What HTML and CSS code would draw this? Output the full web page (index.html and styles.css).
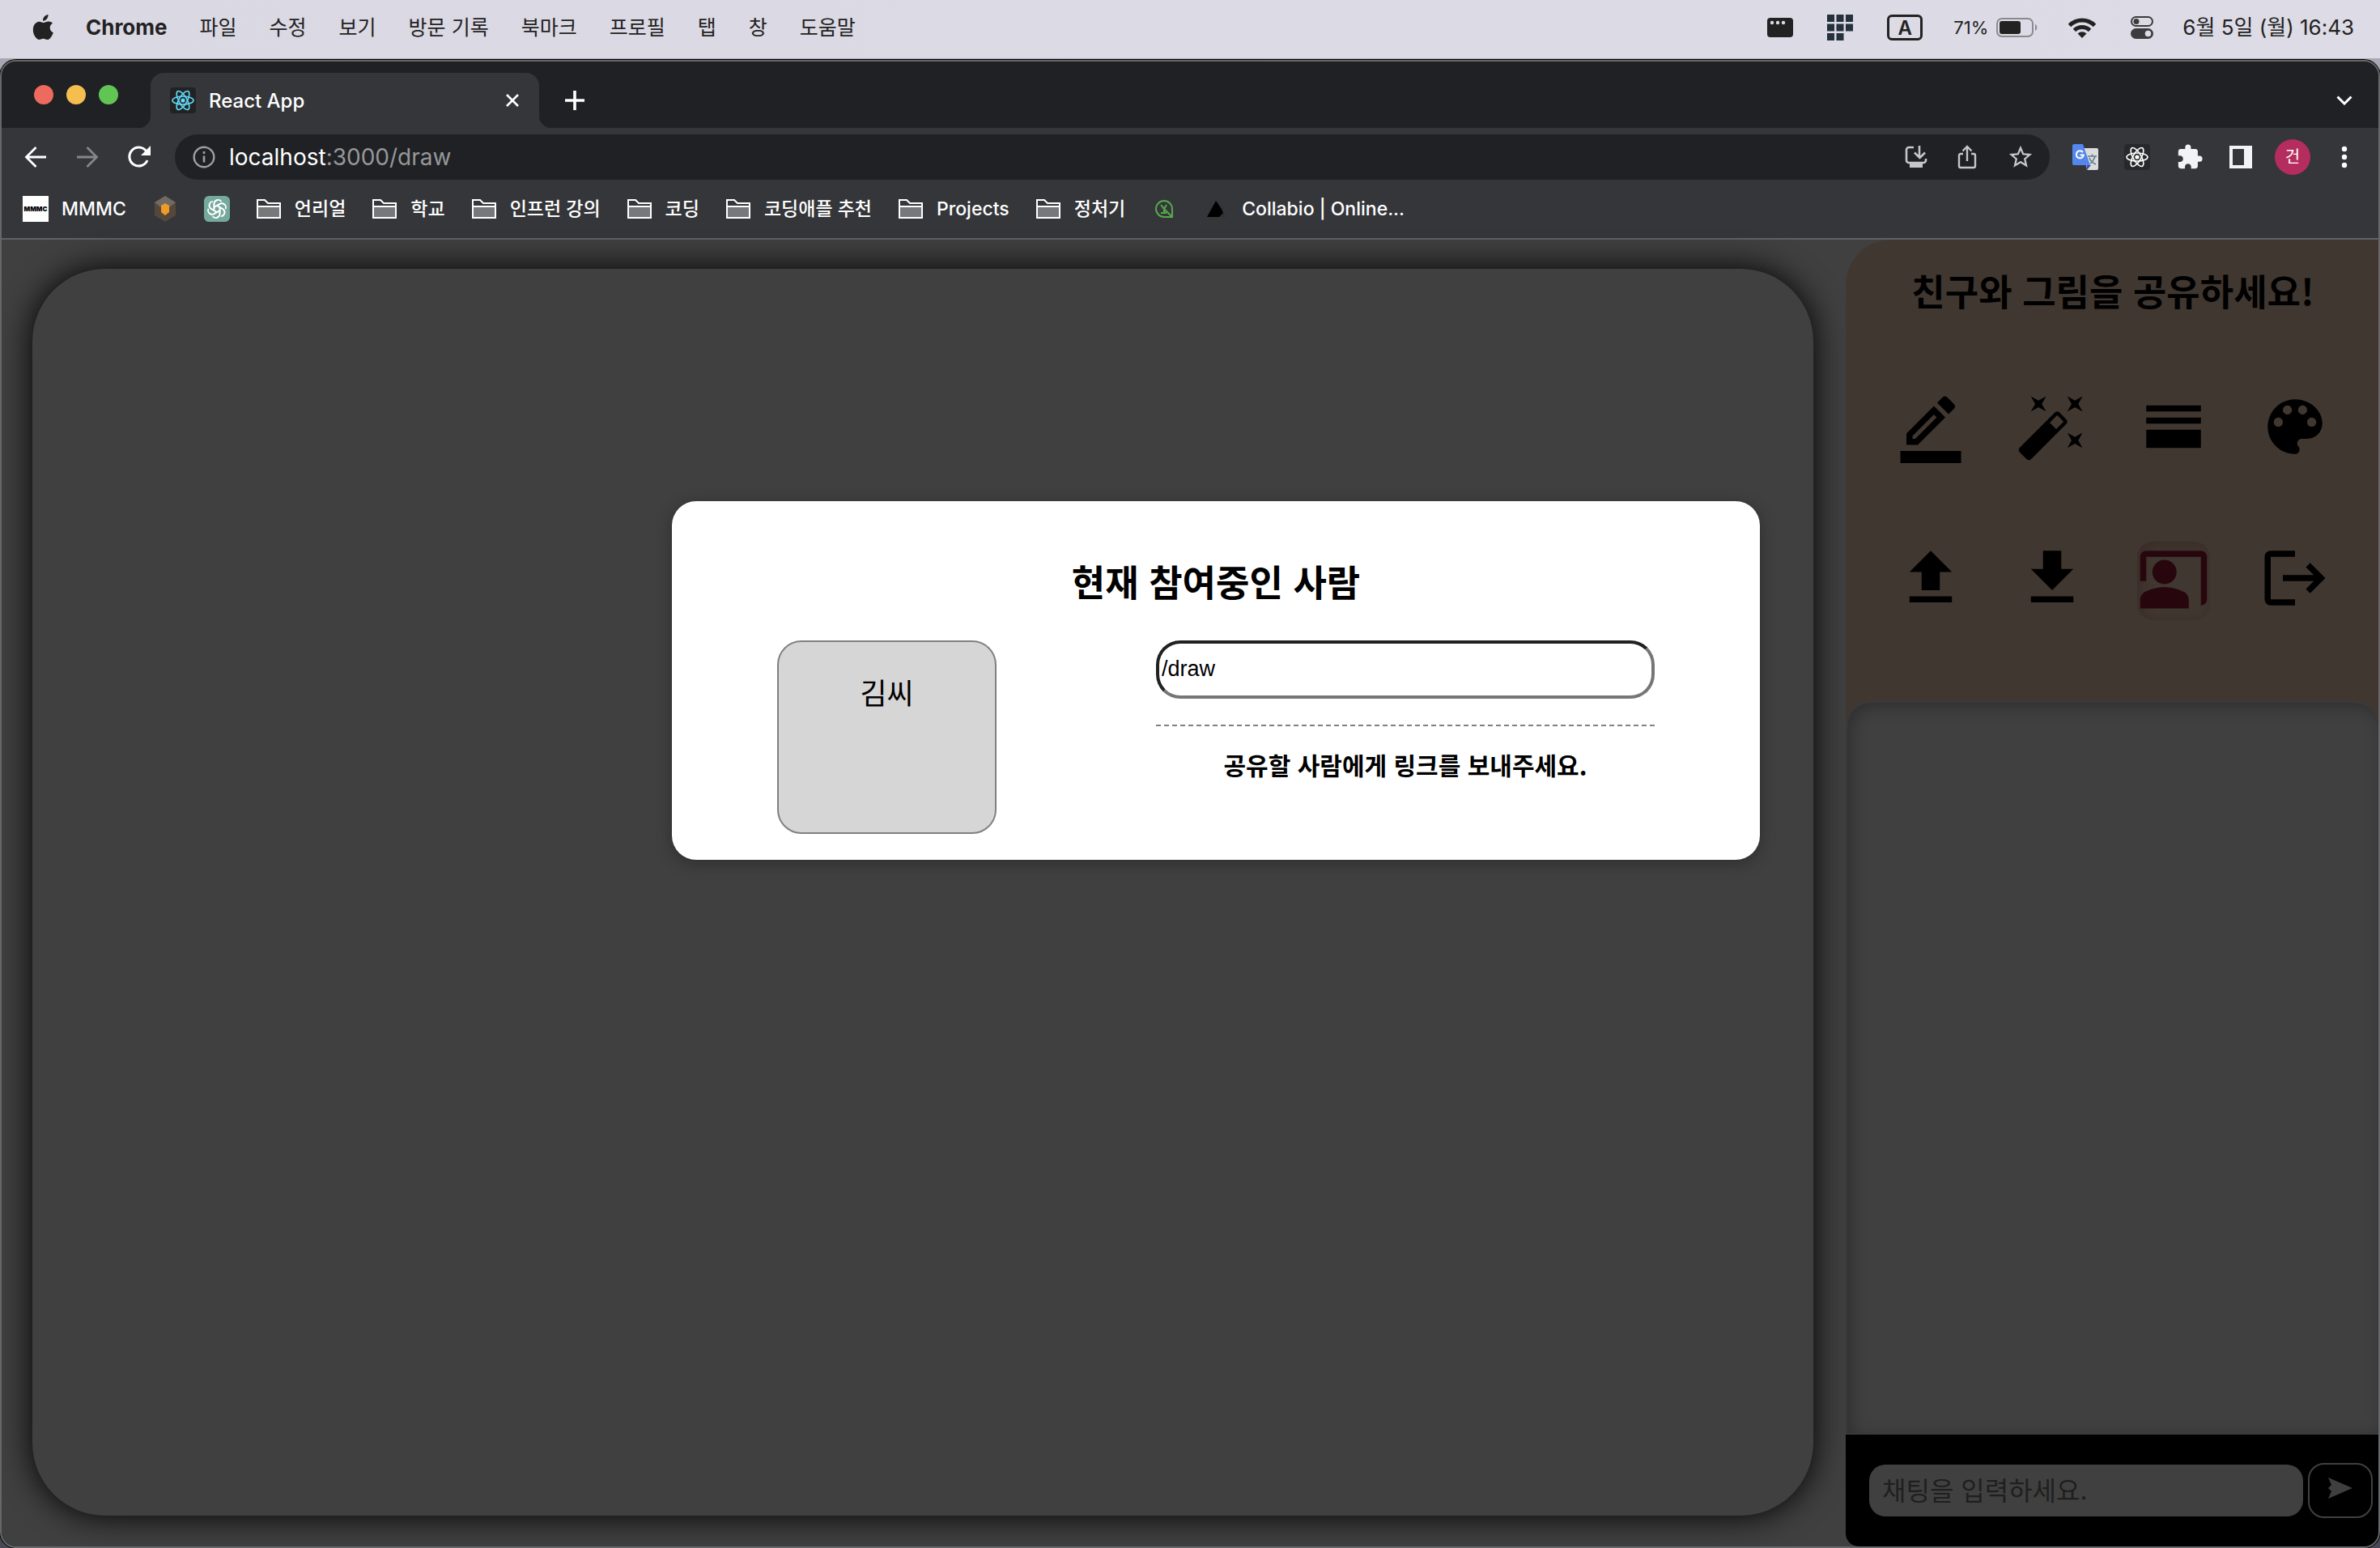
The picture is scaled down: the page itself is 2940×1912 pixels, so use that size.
FILE: index.html
```html
<!DOCTYPE html>
<html lang="ko">
<head>
<meta charset="utf-8">
<title>React App</title>
<link rel="stylesheet" href="styles.css">
</head>
<body>
<svg class="defs" aria-hidden="true">
  <symbol id="folder" viewBox="0 0 32 32">
    <path d="M2 13h28v14H2z" fill="#77787a"/>
    <path d="M2 27V5h9l4 4h15v18zM2 13h28" fill="none" stroke="#fff" stroke-width="2"/>
  </symbol>
  <symbol id="atom" viewBox="0 0 32 32">
    <g fill="none" stroke="currentColor" stroke-width="1.6">
      <ellipse cx="16" cy="16" rx="13" ry="5"/>
      <ellipse cx="16" cy="16" rx="13" ry="5" transform="rotate(60 16 16)"/>
      <ellipse cx="16" cy="16" rx="13" ry="5" transform="rotate(120 16 16)"/>
    </g>
    <circle cx="16" cy="16" r="2.6" fill="currentColor"/>
  </symbol>
</svg>

<header class="menubar">
  <nav class="menus" aria-label="메뉴">
    <svg class="apple" viewBox="0 0 28 34"><path d="M19.500 1c.2 2.100-.6 4-1.800 5.400-1.200 1.400-3 2.400-4.700 2.200-.2-2 .7-4 1.800-5.200C16 2 18 1.100 19.500 1zM25 11.800c-2 1.200-3.300 3-3.300 5.500 0 2.800 1.600 5 4.100 6-.5 1.600-1.300 3.200-2.200 4.600-1.400 2-2.800 4.100-5 4.100-2.100 0-2.800-1.300-5.200-1.300-2.500 0-3.200 1.300-5.200 1.300-2.200 0-3.800-2.200-5.100-4.200C.5 24 .1 17.700 2.100 14c1.500-2.700 4-4.300 6.400-4.300 2.300 0 3.900 1.400 5.500 1.400 1.700 0 3.200-1.500 5.800-1.500 2 0 4 .8 5.200 2.200z" fill="#222"/></svg>
    <strong>Chrome</strong>
    <span>파일</span><span>수정</span><span>보기</span><span>방문 기록</span><span>북마크</span><span>프로필</span><span>탭</span><span>창</span><span>도움말</span>
  </nav>
  <div class="status">
    <svg width="32" height="24" viewBox="0 0 32 24"><rect width="32" height="24" rx="4" fill="#222"/><g fill="#dddbe5"><circle cx="6" cy="6" r="2.200"/><circle cx="13" cy="6" r="2.200"/><circle cx="20" cy="6" r="2.200"/></g></svg>
    <svg width="32" height="32" viewBox="0 0 32 32" fill="#25323d"><path d="M0 0h9v9H0zM11.500 0h9v9h-9zM23 0h9v9h-9zM0 11.500h9v9H0zM11.500 11.500h9v9h-9zM23 11.500h9v9h-9zM0 23h9v9H0zM11.500 23h9v9h-9z"/></svg>
    <span class="input-source">A</span>
    <span class="battery">71%
      <svg width="52" height="24" viewBox="0 0 52 24"><rect x="1" y="1" width="44" height="22" rx="6" fill="none" stroke="#8b8a90" stroke-width="2"/><rect x="4" y="4" width="26" height="16" rx="3" fill="#222"/><path d="M48 8c3 1 3 7 0 8z" fill="#8b8a90"/></svg>
    </span>
    <svg width="36" height="26" viewBox="0 0 36 26"><g fill="none" stroke="#222" stroke-width="5"><path d="M2.500 10.500a22 22 0 0 1 31 0"/><path d="M8.500 16.500a13.500 13.500 0 0 1 19 0"/></g><path d="M18 26l-5.500-5.500a8 8 0 0 1 11 0z" fill="#222"/></svg>
    <svg width="28" height="28" viewBox="0 0 28 28"><rect x="1" y="1" width="26" height="11" rx="5.500" fill="none" stroke="#3c3c3e" stroke-width="2"/><circle cx="7" cy="6.500" r="3.500" fill="#3c3c3e"/><rect y="15" width="28" height="13" rx="6.500" fill="#3c3c3e"/><circle cx="21.500" cy="21.500" r="3.800" fill="#dddbe5"/></svg>
    <time>6월 5일 (월) 16:43</time>
  </div>
</header>

<div class="window">
  <div class="tabstrip">
    <div class="lights"><i class="red"></i><i class="yellow"></i><i class="green"></i></div>
    <div class="tab">
      <svg class="favicon" width="32" height="32"><use href="#atom"/></svg>
      <span>React App</span>
      <button class="close" aria-label="탭 닫기"><svg width="18" height="18" viewBox="0 0 18 18"><path d="M2 2l14 14M16 2L2 16" stroke="#fff" stroke-width="2.600"/></svg></button>
    </div>
    <button class="newtab" aria-label="새 탭"><svg width="24" height="24" viewBox="0 0 24 24"><path d="M12 0v24M0 12h24" stroke="#fff" stroke-width="3.600"/></svg></button>
    <button class="tabsearch" aria-label="탭 검색"><svg width="20" height="12" viewBox="0 0 20 12"><path d="M1.500 1.500L10 10l8.500-8.500" fill="none" stroke="#fff" stroke-width="3"/></svg></button>
  </div>

  <div class="toolbar">
    <button aria-label="뒤로"><svg width="28" height="28" viewBox="0 0 28 28"><path d="M27 14H3M14.500 2L2.500 14l12 12" fill="none" stroke="#fff" stroke-width="2.800"/></svg></button>
    <button aria-label="앞으로"><svg width="28" height="28" viewBox="0 0 28 28"><path d="M1 14h24M13.500 2l12 12-12 12" fill="none" stroke="#85868a" stroke-width="2.800"/></svg></button>
    <button aria-label="새로고침"><svg width="28" height="28" viewBox="0 0 28 28"><path d="M24 18a11.500 11.500 0 1 1-1.500-11.500" fill="none" stroke="#fff" stroke-width="3"/><path d="M28 0v12H16z" fill="#fff"/></svg></button>
    <div class="address">
      <svg width="28" height="28" viewBox="0 0 28 28"><circle cx="14" cy="14" r="12.300" fill="none" stroke="#9aa0a6" stroke-width="2.400"/><path d="M14 12.500v8M14 7v3" stroke="#9aa0a6" stroke-width="2.600"/></svg>
      <span class="url">localhost<span>:3000/draw</span></span>
      <svg width="28" height="28" viewBox="0 0 28 28"><path d="M11 2H5a3 3 0 0 0-3 3v13a3 3 0 0 0 3 3h18a3 3 0 0 0 3-3v-2M18 0v13M12 8.500l6.500 6.500L25 8.500" fill="none" stroke="#c4c7c9" stroke-width="2.600"/><path d="M6 22h16v5H6z" fill="#c4c7c9"/></svg>
      <svg width="28" height="30" viewBox="0 0 28 30"><path d="M9 11H6a2 2 0 0 0-2 2v13a2 2 0 0 0 2 2h16a2 2 0 0 0 2-2V13a2 2 0 0 0-2-2h-3M14 20V2.500M8.500 7.500L14 2l5.500 5.500" fill="none" stroke="#c4c7c9" stroke-width="2.400"/></svg>
      <svg width="34" height="34" viewBox="0 0 24 24"><path d="M22 9.240l-7.190-.62L12 2 9.190 8.630 2 9.240l5.460 4.730L5.820 21 12 17.270 18.180 21l-1.630-7.030L22 9.240zM12 15.400l-3.760 2.270 1-4.280-3.320-2.880 4.380-.38L12 6.100l1.710 4.040 4.380.38-3.320 2.880 1 4.280L12 15.400z" fill="#c4c7c9"/></svg>
    </div>
    <div class="extensions">
      <svg width="32" height="32" viewBox="0 0 32 32"><path d="M14 5h16a2 2 0 0 1 2 2v23a2 2 0 0 1-2 2H18z" fill="#dcdcdc"/><path d="M18 26h5l-5 6z" fill="#3a4bb5"/><path d="M2 0h11l9 26H2a2 2 0 0 1-2-2V2a2 2 0 0 1 2-2z" fill="#5487ee"/><path d="M13 10.200A4.500 4.500 0 1 0 13.800 13.500H9.500" fill="none" stroke="#fff" stroke-width="2"/><path d="M19 15h11M24.500 12.500V15M28 15c-1 4-4 8-6 9M21 17c1 3 4 6 8 8" fill="none" stroke="#607d8b" stroke-width="1.600"/></svg>
      <svg class="react-dev" width="32" height="32"><use href="#atom"/></svg>
      <svg width="34" height="34" viewBox="0 0 24 24"><path d="M20.500 11H19V7c0-1.100-.9-2-2-2h-4V3.500a2.500 2.500 0 0 0-5 0V5H4c-1.100 0-1.990.9-1.990 2v3.800H3.500c1.490 0 2.700 1.210 2.700 2.700s-1.210 2.700-2.700 2.700H2V20c0 1.100.9 2 2 2h3.800v-1.500c0-1.490 1.210-2.700 2.700-2.700s2.700 1.210 2.700 2.700V22H17c1.100 0 2-.9 2-2v-4h1.500a2.500 2.500 0 0 0 0-5z" fill="#f1f3f4"/></svg>
      <svg width="28" height="28" viewBox="0 0 28 28"><path d="M0 0h28v28H0zM4 4v20h14V4z" fill="#f1f3f4" fill-rule="evenodd"/></svg>
      <span class="avatar">건</span>
      <svg class="dots" width="8" height="28" viewBox="0 0 8 28" fill="#fff"><circle cx="4" cy="4" r="3.200"/><circle cx="4" cy="14" r="3.200"/><circle cx="4" cy="24" r="3.200"/></svg>
    </div>
  </div>

  <nav class="bookmarks" aria-label="북마크">
    <a href="#"><span class="mmmc">MMMC</span>MMMC</a>
    <a href="#" aria-label="북마크"><svg width="32" height="32" viewBox="0 0 32 32"><path d="M16 0l13 8v16l-13 8-13-8V8z" fill="#54483c"/><path d="M16 0l13 8-13 10L3 8z" fill="#716a64"/><path d="M11 12l5-3 5 3v8l-5 4-5-4z" fill="#f09a28"/></svg></a>
    <a href="#" aria-label="ChatGPT"><svg width="32" height="32" viewBox="0 0 32 32"><rect width="32" height="32" rx="6" fill="#75a99c"/><g fill="none" stroke="#fff" stroke-width="1.700"><path id="petal" d="M12.500 18V9.500a5 5 0 0 1 9-2.500M12.500 13.800l7-4a5 5 0 0 1 6.300 1.500"/><use href="#petal" transform="rotate(60 16 16)"/><use href="#petal" transform="rotate(120 16 16)"/><use href="#petal" transform="rotate(180 16 16)"/><use href="#petal" transform="rotate(240 16 16)"/><use href="#petal" transform="rotate(300 16 16)"/></g></svg></a>
    <a href="#"><svg width="32" height="32"><use href="#folder"/></svg>언리얼</a>
    <a href="#"><svg width="32" height="32"><use href="#folder"/></svg>학교</a>
    <a href="#"><svg width="32" height="32"><use href="#folder"/></svg>인프런 강의</a>
    <a href="#"><svg width="32" height="32"><use href="#folder"/></svg>코딩</a>
    <a href="#"><svg width="32" height="32"><use href="#folder"/></svg>코딩애플 추천</a>
    <a href="#"><svg width="32" height="32"><use href="#folder"/></svg>Projects</a>
    <a href="#"><svg width="32" height="32"><use href="#folder"/></svg>정처기</a>
    <a href="#" aria-label="북마크"><svg width="32" height="32" viewBox="0 0 32 32"><path d="M16 6a10 10 0 1 0 0 20h10V16A10 10 0 0 0 16 6zM12 11l4 5 3-5M16 16v5M12 21h7M26 26l-10-10" fill="none" stroke="#55a84b" stroke-width="2"/></svg></a>
    <a href="#"><svg width="32" height="32" viewBox="0 0 32 32"><path d="M5 26l11-20 7 10 4 10z" fill="#000"/><path d="M20 26l5-5 2 5z" fill="#333"/></svg>Collabio | Online...</a>
  </nav>

  <main class="page">
    <section class="board" aria-label="그림판"></section>

    <aside class="side">
      <div class="tools">
        <h1>친구와 그림을 공유하세요!</h1>
        <div class="tool-grid">
          <button aria-label="펜"><svg viewBox="0 0 24 24"><path d="M16.810 8.940l-3.750-3.750L4 14.250V18h3.750l9.060-9.060zM6 16v-.92l7.060-7.060.92.92L6.920 16H6zM19.710 6.040c.39-.39.39-1.020 0-1.410l-2.340-2.340c-.39-.39-1.020-.39-1.410 0l-1.830 1.830 3.750 3.750 1.830-1.830zM2 20h20v4H2z"/></svg></button>
          <button aria-label="효과"><svg viewBox="0 0 24 24"><path d="M7.500 5.600L10 7 8.600 4.500 10 2 7.500 3.400 5 2l1.400 2.500L5 7zm12 9.800L17 14l1.400 2.500L17 19l2.500-1.400L22 19l-1.400-2.500L22 14zM22 2l-2.500 1.400L17 2l1.400 2.500L17 7l2.500-1.400L22 7l-1.400-2.500zm-7.630 5.290c-.39-.39-1.020-.39-1.410 0L1.290 18.960c-.39.39-.39 1.020 0 1.410l2.340 2.340c.39.39 1.020.39 1.410 0L16.700 11.050c.39-.39.39-1.020 0-1.410l-2.330-2.350zm-1.030 5.490l-2.120-2.120 2.440-2.440 2.120 2.120-2.440 2.440z"/></svg></button>
          <button aria-label="굵기"><svg viewBox="0 0 24 24"><path d="M3 5h18v2H3zM3 9h18v2H3zM3 13h18v6H3z"/></svg></button>
          <button aria-label="색상"><svg viewBox="0 0 24 24"><path d="M12 3c-4.970 0-9 4.030-9 9s4.030 9 9 9c.83 0 1.500-.67 1.500-1.500 0-.39-.15-.74-.39-1.010-.23-.26-.38-.61-.38-.99 0-.83.67-1.500 1.500-1.500H16c2.760 0 5-2.240 5-5 0-4.420-4.030-8-9-8zm-5.500 9c-.83 0-1.500-.67-1.500-1.500S5.670 9 6.500 9 8 9.670 8 10.500 7.330 12 6.500 12zm3-4C8.670 8 8 7.330 8 6.500S8.670 5 9.500 5s1.500.67 1.500 1.500S10.330 8 9.500 8zm5 0c-.83 0-1.500-.67-1.500-1.500S13.670 5 14.500 5s1.500.67 1.500 1.500S15.330 8 14.500 8zm3 4c-.83 0-1.500-.67-1.500-1.500S16.670 9 17.500 9s1.500.67 1.500 1.500-.67 1.500-1.500 1.500z"/></svg></button>
          <button aria-label="업로드"><svg viewBox="0 0 24 24"><path d="M5 20h14v-2H5v2zm0-10h4v6h6v-6h4l-7-7-7 7z"/></svg></button>
          <button aria-label="다운로드"><svg viewBox="0 0 24 24"><path d="M5 20h14v-2H5v2zM19 9h-4V3H9v6H5l7 7 7-7z"/></svg></button>
          <button class="active" aria-label="참여자"><svg viewBox="0 0 24 24"><path d="M21 3H3c-1.100 0-2 .9-2 2v8h2V5h18v16c1.100 0 2-.9 2-2V5c0-1.100-.9-2-2-2z"/><circle cx="9" cy="10" r="4"/><path d="M15.390 16.560C13.710 15.700 11.530 15 9 15s-4.710.7-6.390 1.560C1.610 17.070 1 18.100 1 19.220V22h16v-2.780c0-1.120-.61-2.150-1.610-2.660z"/></svg></button>
          <button aria-label="나가기"><svg viewBox="0 0 24 24"><path d="M17 7l-1.410 1.410L18.170 11H8v2h10.170l-2.580 2.580L17 17l5-5zM4 5h8V3H4c-1.100 0-2 .9-2 2v14c0 1.100.9 2 2 2h8v-2H4V5z"/></svg></button>
        </div>
      </div>
      <div class="chat-log"></div>
      <form class="chat-form">
        <input type="text" placeholder="채팅을 입력하세요." aria-label="채팅">
        <button type="button" aria-label="보내기"><svg width="30" height="26" viewBox="0 0 30 26"><path d="M0 0l30 13L0 26l4-9-4-4 4-4z" fill="#3d3f40"/></svg></button>
      </form>
    </aside>

    <section class="modal" role="dialog" aria-labelledby="modal-title">
      <h2 id="modal-title">현재 참여중인 사람</h2>
      <div class="modal-body">
        <div class="member">김씨</div>
        <div class="share">
          <input type="text" value="/draw" aria-label="공유 링크">
          <hr>
          <p>공유할 사람에게 링크를 보내주세요.</p>
        </div>
      </div>
    </section>
  </main>
</div>
</body>
</html>
```

FILE: styles.css
```css
* {
  box-sizing: border-box;
}

body {
  margin: 0;
  min-height: 100vh;
  display: flex;
  flex-direction: column;
  background: linear-gradient(#a9a7b3 50%, #484856 50%);
  font-family: Inter, "Noto Sans CJK KR", sans-serif;
  color: #000;
}

button {
  padding: 0;
  border: 0;
  background: none;
  display: flex;
}

svg {
  display: block;
  flex: none;
}

.defs {
  position: absolute;
  width: 0;
  height: 0;
}

/* macOS menu bar */
.menubar {
  height: 72px;
  padding: 0 32px 4px 40px;
  display: flex;
  align-items: center;
  justify-content: space-between;
  background: linear-gradient(90deg, #dad8e2, #dddbe5);
  color: #222;
  font-size: 25px;
  line-height: 36px;
}

.menus,
.status {
  display: flex;
  align-items: center;
  gap: 40px;
}

.menus strong {
  margin-left: -2px;
  font-size: 26px;
}

.apple {
  width: 28px;
  height: 34px;
}

.status {
  gap: 42px;
}

.status time {
  margin-left: -6px;
  font-size: 26px;
}

.input-source {
  width: 44px;
  height: 32px;
  border: 3px solid #222;
  border-radius: 6px;
  font-size: 24px;
  font-weight: 600;
  line-height: 28px;
  text-align: center;
}

.battery {
  display: flex;
  align-items: center;
  gap: 10px;
  margin: 0 -6px 0 -4px;
  font-size: 22px;
}

/* browser window */
.window {
  flex: 1;
  margin-top: 2px;
  display: flex;
  flex-direction: column;
  border: 2px solid #66676a;
  border-radius: 20px;
  box-shadow: 0 0 0 1px #000;
  overflow: hidden;
  background: #35363a;
  color: #fff;
}

.tabstrip {
  height: 82px;
  display: flex;
  align-items: flex-end;
  background: #202124;
}

.lights {
  display: flex;
  gap: 16px;
  padding: 0 40px 29px;
}

.lights i {
  width: 24px;
  height: 24px;
  border-radius: 50%;
}

.red { background: #ed6a5e; }
.yellow { background: #f4bf4f; }
.green { background: #61c554; }

.tab {
  position: relative;
  width: 480px;
  height: 68px;
  padding: 0 24px;
  display: flex;
  align-items: center;
  gap: 16px;
  border-radius: 16px 16px 0 0;
  background: #35363a;
  font-size: 24px;
  font-weight: 500;
}

.tab::before,
.tab::after {
  content: "";
  position: absolute;
  bottom: 0;
  width: 16px;
  height: 16px;
}

.tab::before {
  left: -16px;
  background: radial-gradient(circle at 0 0, #202124 16px, #35363a 17px);
}

.tab::after {
  right: -16px;
  background: radial-gradient(circle at 100% 0, #202124 16px, #35363a 17px);
}

.favicon {
  border-radius: 4px;
  background: #222;
  color: #61dafb;
}

.close {
  margin-left: auto;
}

.newtab {
  margin: 0 0 22px 32px;
}

.tabsearch {
  margin: 0 32px 28px auto;
}

.toolbar {
  height: 72px;
  padding: 8px 38px 8px 28px;
  display: flex;
  align-items: center;
  gap: 36px;
}

.address {
  flex: 1;
  height: 56px;
  margin-left: -6px;
  padding: 0 19px 0 22px;
  display: flex;
  align-items: center;
  gap: 35px;
  border-radius: 28px;
  background: #202124;
  font-size: 28px;
}

.url {
  flex: 1;
  margin-left: -18px;
}

.url span {
  color: #96989b;
}

.extensions {
  display: flex;
  align-items: center;
  gap: 32px;
  margin-left: -8px;
}

.react-dev {
  border-radius: 4px;
  background: #27282b;
}

.avatar {
  width: 44px;
  height: 44px;
  margin-left: -4px;
  border-radius: 50%;
  background: #b52c5e;
  font-size: 20px;
  line-height: 44px;
  text-align: center;
}

.dots {
  margin-left: 6px;
}

.bookmarks {
  height: 66px;
  padding: 0 26px 8px;
  display: flex;
  align-items: center;
  gap: 32px;
  border-bottom: 2px solid #5f6167;
  font-size: 23px;
  font-weight: 500;
}

.bookmarks a {
  display: flex;
  align-items: center;
  gap: 16px;
  color: #fff;
  line-height: 32px;
  text-decoration: none;
  white-space: nowrap;
}

.mmmc {
  width: 32px;
  height: 32px;
  background: #fff;
  color: #000;
  font-size: 8px;
  font-weight: 900;
  text-align: center;
}

/* drawing app */
.page {
  position: relative;
  flex: 1;
  display: grid;
  grid-template-columns: minmax(0, 1fr) 658px;
  background: #404040;
  color: #000;
}

.board {
  margin: 36px 40px 38px 38px;
  border-radius: 90px;
  background: #404040;
  box-shadow: 0 0 40px #000;
}

.side {
  display: flex;
  flex-direction: column;
  z-index: 1;
}

.tools {
  padding: 30px 18px 160px 20px;
  border-radius: 56px 0 0 0;
  background: #403730;
}

.tools h1,
.modal h2 {
  margin: 0;
  font-family: "Noto Sans CJK KR", sans-serif;
  font-size: 45px;
  font-weight: 700;
  line-height: 66px;
  text-align: center;
}

.tool-grid {
  margin-top: 90px;
  display: grid;
  grid-template-columns: repeat(4, 90px);
  gap: 90px 60px;
  justify-content: center;
}

.tool-grid button {
  height: 97px;
  border-radius: 20px;
}

.tool-grid svg {
  width: 90px;
  height: 90px;
}

.tool-grid .active {
  box-shadow: inset 4px 4px 16px rgba(39, 7, 13, 0.25);
}

.active svg {
  fill: #27070d;
}

.chat-log {
  flex: 1;
  margin-top: -60px;
  border: 2px solid #3a3a3b;
  border-right: 0;
  border-radius: 30px 30px 0 0;
  background: #404040;
  box-shadow: inset 5px 5px 20px rgba(0, 0, 0, 0.28);
}

.chat-form {
  height: 138px;
  padding: 0 7px 0 29px;
  display: flex;
  align-items: center;
  gap: 6px;
  border-radius: 0 0 0 16px;
  background: #000;
}

.chat-form input {
  flex: 1;
  min-width: 0;
  height: 64px;
  padding: 0 16px 4px;
  border: 0;
  border-radius: 20px;
  background: #404040;
  font-family: "Noto Sans CJK KR", sans-serif;
  font-size: 32px;
}

.chat-form input::placeholder {
  color: #1f1f1f;
}

.chat-form button {
  width: 80px;
  height: 68px;
  align-items: center;
  justify-content: center;
  padding-bottom: 6px;
  border: 2px solid #404040;
  border-radius: 20px;
}

/* participants dialog */
.modal {
  position: absolute;
  z-index: 2;
  top: 323px;
  left: 828px;
  right: 764px;
  padding: 66px 130px 32px;
  border-radius: 30px;
  background: #fff;
  box-shadow: 0 4px 20px rgba(0, 0, 0, 0.3);
}

.modal-body {
  margin-top: 40px;
  display: flex;
  justify-content: space-between;
}

.member {
  width: 271px;
  height: 239px;
  padding-top: 35px;
  border: 2px solid #808080;
  border-radius: 30px;
  background: #d6d6d6;
  font-family: "Noto Sans CJK KR", sans-serif;
  font-size: 36px;
  line-height: 52px;
  text-align: center;
}

.share {
  width: 616px;
}

.share input {
  display: block;
  width: 100%;
  height: 72px;
  padding: 0 3px 2px;
  border: 4px inset #767676;
  border-radius: 30px;
  background: #fff;
  font-family: "Liberation Sans", sans-serif;
  font-size: 27px;
}

.share hr {
  margin: 32px 0 0;
  border: 0;
  border-top: 2px dashed #808080;
}

.share p {
  margin: 25px 0 0;
  font-family: "Noto Sans CJK KR", sans-serif;
  font-size: 30px;
  font-weight: 700;
  line-height: 44px;
  text-align: center;
}
```
